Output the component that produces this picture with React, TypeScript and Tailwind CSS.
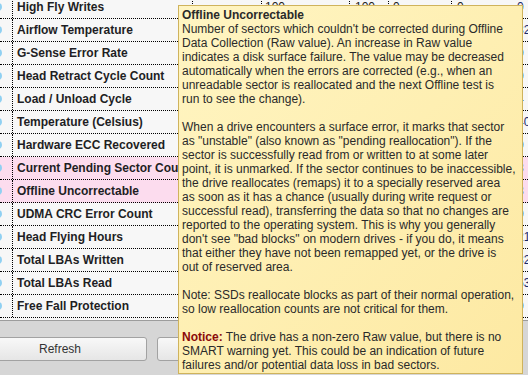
import React from 'react';

type Attr = {
  name: string;
  norm: string;
  worst: string;
  thresh: string;
  raw: string;
  pink?: boolean;
};

const attrs: Attr[] = [
  { name: 'High Fly Writes', norm: '100', worst: '100', thresh: '0', raw: '0' },
  { name: 'Airflow Temperature', norm: '68', worst: '55', thresh: '45', raw: '32' },
  { name: 'G-Sense Error Rate', norm: '100', worst: '100', thresh: '0', raw: '0' },
  { name: 'Head Retract Cycle Count', norm: '100', worst: '100', thresh: '0', raw: '0' },
  { name: 'Load / Unload Cycle', norm: '98', worst: '98', thresh: '0', raw: '4' },
  { name: 'Temperature (Celsius)', norm: '32', worst: '45', thresh: '0', raw: '40' },
  { name: 'Hardware ECC Recovered', norm: '60', worst: '44', thresh: '0', raw: '0' },
  { name: 'Current Pending Sector Count', norm: '100', worst: '100', thresh: '0', raw: '8', pink: true },
  { name: 'Offline Uncorrectable', norm: '100', worst: '100', thresh: '0', raw: '8', pink: true },
  { name: 'UDMA CRC Error Count', norm: '200', worst: '200', thresh: '0', raw: '0' },
  { name: 'Head Flying Hours', norm: '100', worst: '253', thresh: '0', raw: '2145' },
  { name: 'Total LBAs Written', norm: '100', worst: '253', thresh: '0', raw: '32981' },
  { name: 'Total LBAs Read', norm: '100', worst: '253', thresh: '0', raw: '53210' },
  { name: 'Free Fall Protection', norm: '100', worst: '100', thresh: '0', raw: '0' },
];

function Row({ a }: { a: Attr }) {
  return (
    <div
      className={`flex h-[23px] border-b border-dotted border-black ${a.pink ? 'bg-[#fcdcee]' : ''}`}
    >
      <div className="flex w-[13px] shrink-0 items-center border-r border-dotted border-black">
        <div className="-ml-[6px] h-[8px] w-[8px] rounded-full bg-[#8fd0f2]" />
      </div>
      <div className="flex w-[180px] shrink-0 items-center overflow-hidden whitespace-nowrap border-r border-dotted border-black pl-[4px] font-bold text-[#1e1e24]">
        {a.name}
      </div>
      <div className="w-[69px] shrink-0 border-r border-dotted border-black" />
      <div className="flex w-[88px] shrink-0 items-center border-r border-dotted border-black pl-[3px]">
        {a.norm}
      </div>
      <div className="flex w-[39px] shrink-0 items-center border-r border-dotted border-black pl-[5px]">
        {a.worst}
      </div>
      <div className="flex w-[63px] shrink-0 items-center border-r border-dotted border-black pl-[4px]">
        {a.thresh}
      </div>
      <div className="flex w-[65px] shrink-0 items-center pl-[5px]">0</div>
      <div className="flex flex-1 items-center overflow-hidden whitespace-nowrap text-[#1b2a6b]">
        {a.raw}
      </div>
    </div>
  );
}

export default function App() {
  return (
    <div className="relative h-[375px] w-[528px] overflow-hidden bg-[#d6d6d6] font-['Liberation_Sans',Arial,sans-serif] text-[12px] leading-[14px] text-[#222]">
      <div className="h-[320px] overflow-hidden bg-[#f7f7f7]">
        <div className="-mt-[4px]">
          {attrs.map((a) => (
            <Row key={a.name} a={a} />
          ))}
        </div>
      </div>

      <div className="flex h-[55px] gap-[10px] border-t border-[#9c9c9c] pt-[16px]">
        <button className="-ml-[27px] h-[24px] w-[174px] shrink-0 rounded-[3px] border border-[#a2a2a2] bg-gradient-to-b from-[#f8f8f8] to-[#e6e6e6] text-[#333]">
          Refresh
        </button>
        <button className="h-[24px] w-[174px] shrink-0 rounded-[3px] border border-[#a2a2a2] bg-gradient-to-b from-[#f8f8f8] to-[#e6e6e6] text-[#333]">
          Execute
        </button>
      </div>

      <div className="absolute left-[178px] top-[5px] h-[369px] w-[345px] whitespace-nowrap border border-[#cfb35c] bg-gradient-to-br from-[#fff5c2] to-[#fde9a2] pl-[3px] pt-[2px] text-[#2a2a2a]">
        <div className="font-bold">Offline Uncorrectable</div>
        <p>
          Number of sectors which couldn't be corrected during Offline
          <br />
          Data Collection (Raw value). An increase in Raw value
          <br />
          indicates a disk surface failure. The value may be decreased
          <br />
          automatically when the errors are corrected (e.g., when an
          <br />
          unreadable sector is reallocated and the next Offline test is
          <br />
          run to see the change).
        </p>
        <p className="mt-[14px]">
          When a drive encounters a surface error, it marks that sector
          <br />
          as "unstable" (also known as "pending reallocation"). If the
          <br />
          sector is successfully read from or written to at some later
          <br />
          point, it is unmarked. If the sector continues to be inaccessible,
          <br />
          the drive reallocates (remaps) it to a specially reserved area
          <br />
          as soon as it has a chance (usually during write request or
          <br />
          successful read), transferring the data so that no changes are
          <br />
          reported to the operating system. This is why you generally
          <br />
          don't see "bad blocks" on modern drives - if you do, it means
          <br />
          that either they have not been remapped yet, or the drive is
          <br />
          out of reserved area.
        </p>
        <p className="mt-[14px]">
          Note: SSDs reallocate blocks as part of their normal operation,
          <br />
          so low reallocation counts are not critical for them.
        </p>
        <p className="mt-[14px]">
          <span className="font-bold text-[#8b0a0a]">Notice:</span> The drive has a non-zero Raw value, but there is no
          <br />
          SMART warning yet. This could be an indication of future
          <br />
          failures and/or potential data loss in bad sectors.
        </p>
      </div>
    </div>
  );
}
